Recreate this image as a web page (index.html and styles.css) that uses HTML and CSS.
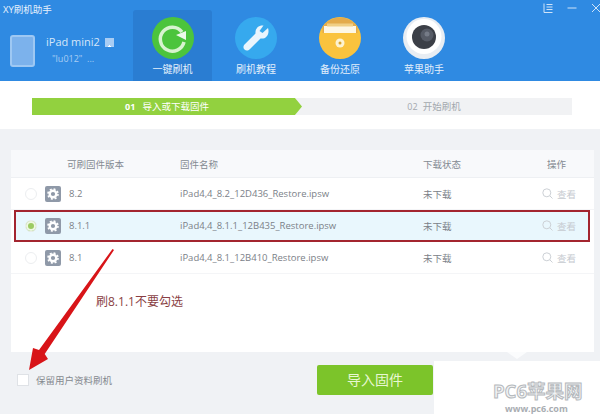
FILE: index.html
```html
<!DOCTYPE html>
<html>
<head>
<meta charset="utf-8">
<title>XY刷机助手</title>
<link rel="stylesheet" href="styles.css">
</head>
<body>
<svg class="defs" width="0" height="0">
  <symbol id="gear" viewBox="0 0 16 16">
    <circle cx="8" cy="8" r="3.300" fill="none" stroke="#fff" stroke-width="2.400"/>
    <circle cx="8" cy="8" r="5" fill="none" stroke="#fff" stroke-width="1.600" stroke-dasharray="2 1.930"/>
  </symbol>
  <symbol id="lens" viewBox="0 0 11 11">
    <circle cx="4.800" cy="4.800" r="4" fill="none" stroke="#ccd0d5"/>
    <path d="M7.800 7.800L10.500 10.500" stroke="#ccd0d5"/>
  </symbol>
</svg>
<div class="app">
  <div class="top">
    <div class="app-title">XY刷机助手</div>
    <div class="win-btns">
      <svg width="10" height="10" viewBox="0 0 10 10"><path d="M1 0.500V9.500H9.500M3.500 1.500H9.500M3.500 4H9.500M3.500 6.500H9.500" fill="none" stroke="#cfe3f8" stroke-width="1"/></svg>
      <svg width="10" height="10" viewBox="0 0 10 10"><path d="M0.500 5H9.500" stroke="#cfe3f8" stroke-width="1"/></svg>
      <svg width="10" height="10" viewBox="0 0 10 10"><path d="M1 1L9 9M9 1L1 9" stroke="#cfe3f8" stroke-width="1"/></svg>
    </div>
    <div class="device">
      <div class="tablet"></div>
      <div class="device-info">
        <div class="device-name">iPad mini2<span class="caret"></span></div>
        <div class="device-user">"lu012" &nbsp;...</div>
      </div>
    </div>
    <div class="nav">
      <div class="nav-item active">
        <svg width="42" height="42" viewBox="0 0 42 42">
          <circle cx="21" cy="21" r="21" fill="#4cc43c"/>
          <path d="M30 15A12 12 0 1 0 32 25" fill="none" stroke="#d8f3cf" stroke-width="3.500"/>
          <path d="M24 18L34 14L34 23Z" fill="#eef9ea"/>
        </svg>
        <span>一键刷机</span>
      </div>
      <div class="nav-item">
        <svg width="42" height="42" viewBox="0 0 42 42">
          <circle cx="21" cy="21" r="21" fill="#36a9ee"/>
          <path d="M33 11L27.500 16L24.500 14L28.500 8.500C24 8 20 11 20.500 16.500L10 27C8 29 8 31 9.500 32.500C11 34 13 34 15 32L25.500 21.500C31 22.500 35 17 33 11Z" fill="#e9f5fd"/>
        </svg>
        <span>刷机教程</span>
      </div>
      <div class="nav-item">
        <svg width="42" height="42" viewBox="0 0 42 42">
          <circle cx="21" cy="21" r="21" fill="#fac33e"/>
          <path d="M3.500 10A21 21 0 0 1 38.500 10V16H3.500Z" fill="#e3ab4c"/>
          <rect x="5" y="9" width="32" height="7" fill="#fdf7e6"/>
          <rect x="8" y="6.500" width="26" height="3" fill="#f0cf85"/>
          <circle cx="21" cy="26" r="4.500" fill="#fdf3d2"/>
          <circle cx="21" cy="26" r="1.500" fill="#d9a42e"/>
        </svg>
        <span>备份还原</span>
      </div>
      <div class="nav-item">
        <svg width="42" height="42" viewBox="0 0 42 42">
          <circle cx="21" cy="21" r="21" fill="#e8edf3"/>
          <circle cx="21" cy="19.500" r="17.500" fill="#ffffff"/>
          <circle cx="21" cy="20" r="12" fill="#3b3f47"/>
          <circle cx="24" cy="18" r="6.500" fill="#565b66"/>
          <circle cx="24" cy="17" r="2.500" fill="#757b87"/>
        </svg>
        <span>苹果助手</span>
      </div>
    </div>
  </div>

  <div class="steps">
    <div class="step step-on"><b>01</b>导入或下载固件</div>
    <div class="step step-off"><i>02</i>开始刷机</div>
  </div>

  <div class="content">
    <div class="panel">
      <div class="row head">
        <span></span>
        <span>可刷固件版本</span>
        <span>固件名称</span>
        <span>下载状态</span>
        <span class="cell-op">操作</span>
      </div>
      <div class="row">
        <span class="cell-pick"><span class="radio"></span><span class="gear"><svg width="16" height="16"><use href="#gear"/></svg></span></span>
        <span class="ver">8.2</span>
        <span>iPad4,4_8.2_12D436_Restore.ipsw</span>
        <span>未下载</span>
        <span class="view"><svg class="lens" width="11" height="11"><use href="#lens"/></svg>查看</span>
      </div>
      <div class="row picked">
        <span class="cell-pick"><span class="radio radio-on"></span><span class="gear"><svg width="16" height="16"><use href="#gear"/></svg></span></span>
        <span class="ver">8.1.1</span>
        <span>iPad4,4_8.1.1_12B435_Restore.ipsw</span>
        <span>未下载</span>
        <span class="view"><svg class="lens" width="11" height="11"><use href="#lens"/></svg>查看</span>
      </div>
      <div class="row">
        <span class="cell-pick"><span class="radio"></span><span class="gear"><svg width="16" height="16"><use href="#gear"/></svg></span></span>
        <span class="ver">8.1</span>
        <span>iPad4,4_8.1_12B410_Restore.ipsw</span>
        <span>未下载</span>
        <span class="view"><svg class="lens" width="11" height="11"><use href="#lens"/></svg>查看</span>
      </div>
      <div class="note">刷8.1.1不要勾选</div>
      <div class="notch"></div>
    </div>
    <div class="foot">
      <label class="keep"><span class="check"></span>保留用户资料刷机</label>
      <div class="import-btn">导入固件</div>
    </div>
  </div>

  <svg class="arrow" width="120" height="140" viewBox="0 0 120 140">
    <path d="M94 18L24.700 122L28 127L9 138L13 116L19 118L92.500 17Z" fill="#d81418"/>
  </svg>
  <div class="mark">
    <div class="mark-name">PC6苹果网</div>
    <div class="mark-url">www.pc6.com</div>
  </div>
</div>
</body>
</html>
```

FILE: styles.css
```css
html, body { margin: 0; padding: 0; }
body { width: 600px; height: 414px; overflow: hidden; font-family: "Open Sans", "Noto Sans CJK SC", sans-serif; font-size: 10px; color: #6f7680; }

.defs { position: absolute; }
.app { position: relative; width: 600px; height: 414px; background: #f0f2f5; overflow: hidden; }

/* blue header */
.top { position: relative; display: flex; height: 81px; background: #2f8ae2; color: #fff; }
.app-title { position: absolute; left: 3px; top: 3px; font-size: 9.5px; line-height: 14px; color: #e6f1fc; }
.win-btns { position: absolute; right: -1px; top: 3px; display: flex; gap: 14px; }
.device { display: flex; width: 133px; padding: 35px 0 0 10px; box-sizing: border-box; }
.tablet { width: 21px; height: 28px; border: 2px solid #9ec8f3; border-radius: 3px; background: #7cb2ec; }
.device-info { margin-left: 11px; }
.device-name { display: flex; align-items: center; margin-top: -1px; font-size: 11px; line-height: 16px; color: #d5e6f9; }
.caret { width: 9px; height: 9px; margin-left: 5px; background: linear-gradient(#a9cdf4 3px, transparent 3px), conic-gradient(from 135deg at 50% 78%, #fff 90deg, #a9cdf4 90deg); }
.device-user { margin: 3px 0 0 6px; font-size: 9px; line-height: 12px; color: #a9cdf4; }
.nav { display: flex; }
.nav-item { display: flex; flex-direction: column; align-items: center; width: 84px; height: 71px; margin-top: 10px; padding-top: 7px; box-sizing: border-box; }
.nav-item span { margin-top: 3px; font-size: 10px; line-height: 14px; color: #e3effb; }
.nav-item.active { width: 79px; margin-right: 2px; background: #2a7dd2; border-radius: 3px 3px 0 0; }

/* steps */
.steps { display: flex; height: 48px; padding: 17px 0 0 32px; box-sizing: border-box; background: #fff; }
.step { height: 17px; line-height: 17px; font-size: 9.5px; text-align: center; }
.step-on { position: relative; z-index: 1; width: 270px; background: #92d13f; color: #fff; clip-path: polygon(0 0, 263px 0, 100% 50%, 263px 100%, 0 100%); }
.step-on b { margin-right: 7px; font-size: 9px; }
.step-off { width: 276px; margin-left: -6px; background: #f1f2f4; color: #a3a8ae; }
.step-off i { margin-right: 5px; font-style: normal; font-size: 9px; }

/* table */
.content { padding: 21px 6px 0 11px; }
.panel { position: relative; height: 202px; background: #fff; font-size: 9.5px; }
.row { display: grid; grid-template-columns: 56px 113px 243px 100px 1fr; align-items: center; height: 32px; box-sizing: border-box; color: #7b8188; border-bottom: 1px solid #f4f5f7; }
.head { height: 28px; background: #f8f9fb; color: #848a92; border-bottom: 1px solid #eef0f3; }
.ver { margin-left: 2px; }
.cell-op { margin-left: 24px; }
.cell-pick { display: flex; align-items: center; padding-left: 14px; }
.radio { width: 10px; height: 10px; border: 1px solid #eceef0; border-radius: 50%; background: #fff; }
.radio-on { background: #9ccb62; box-shadow: inset 0 0 0 2px #eef7e3; }
.gear { display: flex; width: 16px; height: 16px; margin-left: 8px; border-radius: 2px; background: #8f99a8; }
.picked { background: #e9f7fd; outline: 2px solid #a3252f; outline-offset: -2px; margin: 0 4px 0 3px; grid-template-columns: 53px 113px 243px 100px 1fr; }
.picked .cell-pick { padding-left: 11px; }
.view { display: flex; align-items: center; margin-left: 19px; color: #c6cad0; }
.lens { margin-right: 4px; }
.note { margin: 20px 0 0 85px; font-size: 12px; line-height: 16px; color: #8a3f45; }
.notch { position: absolute; left: 496px; top: 100%; border: 10px solid transparent; border-top: 7px solid #fbfcfd; border-bottom: 0; }

/* bottom */
.foot { display: flex; align-items: center; height: 52px; padding-top: 3px; box-sizing: border-box; }
.keep { display: flex; align-items: center; margin: 0 0 0 6px; width: 300px; font-size: 9.5px; color: #85898f; }
.check { width: 10px; height: 10px; margin-right: 7px; border: 1px solid #dfe2e6; background: #fff; }
.import-btn { width: 116px; height: 30px; line-height: 30px; border-radius: 2px; background: #7cc42a; color: #e8f7d2; font-size: 14px; text-align: center; }

/* drawn over the screenshot */
.arrow { position: absolute; left: 20px; top: 232px; }
.mark { position: absolute; left: 434px; top: 361px; width: 166px; height: 53px; background: #fff; }
.mark-name { margin: 20px 0 0 59px; font-size: 18.500px; line-height: 20px; font-weight: bold; color: #f2f3f4; -webkit-text-stroke: 1px #b5b9bd; white-space: nowrap; }
.mark-url { margin: 3px 0 0 71px; font-size: 9px; line-height: 9px; font-weight: bold; color: #a9adb2; }
```
